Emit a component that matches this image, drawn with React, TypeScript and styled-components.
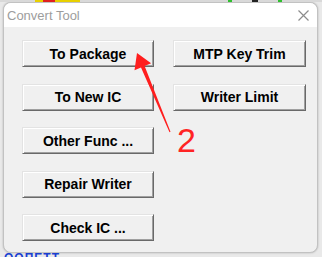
import styled, { createGlobalStyle } from 'styled-components';

const GlobalStyle = createGlobalStyle`
  html, body {
    margin: 0;
    padding: 0;
    background: #e9e9e9;
  }
  body {
    font-family: 'Liberation Sans', Arial, sans-serif;
  }
`;

const leftButtons = ['To Package', 'To New IC', 'Other Func ...', 'Repair Writer', 'Check IC ...'];
const rightButtons = ['MTP Key Trim', 'Writer Limit'];

const stripColors = [
  { w: 35, c: '#d9d9d9' },
  { w: 8, c: '#e8d000' },
  { w: 12, c: '#e02020' },
  { w: 25, c: '#e8d000' },
  { w: 148, c: '#d9d9d9' },
  { w: 4, c: '#30c030' },
  { w: 20, c: '#d9d9d9' },
  { w: 6, c: '#222222' },
  { w: 20, c: '#d9d9d9' },
  { w: 4, c: '#30c030' },
  { w: 40, c: '#d9d9d9' },
];

export default function App() {
  return (
    <>
      <GlobalStyle />
      <Page>
        <TopStrip>
          {stripColors.map((s, i) => (
            <StripPiece key={i} $w={s.w} $c={s.c} />
          ))}
        </TopStrip>

        <Window>
          <TitleBar>
            <Title>Convert Tool</Title>
            <CloseIcon viewBox="0 0 11 11">
              <path d="M0.5 0.5 L10.5 10.5 M10.5 0.5 L0.5 10.5" />
            </CloseIcon>
          </TitleBar>

          <Client>
            <Column>
              {leftButtons.map((label) => (
                <Button key={label}>{label}</Button>
              ))}
            </Column>
            <Column>
              {rightButtons.map((label) => (
                <Button key={label}>{label}</Button>
              ))}
            </Column>
          </Client>
        </Window>

        <BehindText>ООПЕТТ . . .</BehindText>

        <Arrow viewBox="0 0 322 257">
          <polygon points="137,53 151.1,63.3 144.6,66 170.5,131.8 169.5,132.2 141,67.6 134.5,70.3" />
        </Arrow>
        <StepNumber>2</StepNumber>
      </Page>
    </>
  );
}

const Page = styled.div`
  position: relative;
  width: 322px;
  height: 257px;
  overflow: hidden;
  background: #e9e9e9;
`;

const TopStrip = styled.div`
  display: flex;
  height: 2px;
`;

const StripPiece = styled.div<{ $w: number; $c: string }>`
  width: ${(p) => p.$w}px;
  background: ${(p) => p.$c};
`;

const Window = styled.div`
  width: 315px;
  height: 251px;
  margin-left: 3px;
  box-sizing: border-box;
  border: 1px solid #c2c2c2;
  border-radius: 8px;
  overflow: hidden;
  background: #f0f0f0;
  box-shadow: 0 0 2px rgba(0, 0, 0, 0.25);
  display: flex;
  flex-direction: column;
`;

const TitleBar = styled.div`
  height: 24px;
  background: #ffffff;
  display: flex;
  align-items: center;
  justify-content: space-between;
  padding: 0 8px 0 3px;
`;

const Title = styled.span`
  font-size: 13px;
  color: #9d9d9d;
  margin-top: 1px;
`;

const CloseIcon = styled.svg`
  width: 11px;
  height: 11px;
  fill: none;
  stroke: #8c8c8c;
  stroke-width: 1.2;
`;

const Client = styled.div`
  flex: 1;
  display: flex;
  gap: 19px;
  padding: 13px 0 0 18px;
`;

const Column = styled.div`
  display: flex;
  flex-direction: column;
  gap: 16.5px;
  width: 132px;

  & + & {
    width: 133px;
  }
`;

const Button = styled.div`
  height: 27px;
  box-sizing: border-box;
  display: flex;
  align-items: center;
  justify-content: center;
  background: #f0f0f0;
  border: 1px solid;
  border-color: #e3e3e3 #696969 #696969 #e3e3e3;
  box-shadow: inset 1px 1px #ffffff, inset -1px -1px #a0a0a0;
  font-size: 14px;
  font-weight: bold;
  color: #000000;
  white-space: nowrap;
`;

const BehindText = styled.div`
  margin-left: 4px;
  height: 4px;
  overflow: hidden;
  font-size: 12px;
  line-height: 10px;
  font-weight: bold;
  color: #1a3fd1;
  letter-spacing: 1px;
`;

const Arrow = styled.svg`
  position: absolute;
  top: 0;
  left: 0;
  width: 322px;
  height: 257px;
  pointer-events: none;
  fill: #ff1e1e;
`;

const StepNumber = styled.div`
  position: absolute;
  left: 177px;
  top: 123px;
  font-size: 34px;
  line-height: 1;
  color: #ff2424;
`;
